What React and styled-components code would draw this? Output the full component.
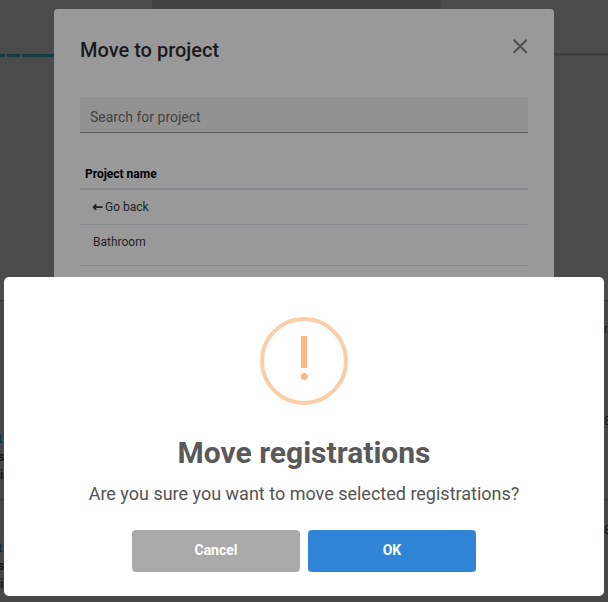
import React, { useState } from "react";
import styled, { createGlobalStyle } from 'styled-components';

const GlobalStyle = createGlobalStyle`
  * {
    box-sizing: border-box;
  }
  body {
    margin: 0;
    font-family: Roboto, "Liberation Sans", sans-serif;
    overflow: hidden;
  }
`;

const Screen = styled.div`
  position: relative;
  height: 602px;
  overflow: hidden;
  background: #4b4b4b;
`;

const TopBar = styled.div`
  height: 54px;
  padding-left: 152px;
`;

const TopTab = styled.div`
  width: 289px;
  height: 40px;
  background: #434343;
`;

const Divider = styled.div`
  display: flex;
  height: 3px;
  gap: 2px;
  margin-bottom: 243px;
`;

const Segment = styled.div`
  width: ${props => props.width}px;
  background: #183b42;
`;

const Shade = styled.div`
  flex: 1;
  margin-top: -1px;
  height: 3px;
  background: linear-gradient(#434343, #3d3d3d, #454545);
`;

const Card = styled.div`
  display: flex;
  justify-content: space-between;
  height: ${props => props.height}px;
  padding-top: ${props => props.top}px;
  background: #474747;
  border-top: 1px solid ${props => props.faint ? '#434343' : '#393939'};
`;

const Labels = styled.div`
  width: 6px;
  font-size: 12px;
  font-weight: 700;
  line-height: 18px;
`;

const Label = styled.div`
  margin-left: ${props => props.shift}px;
  white-space: nowrap;
  color: ${props => props.link ? '#102b38' : '#171717'};
`;

const Amount = styled.div`
  width: 4px;
  font-size: 12px;
  line-height: 18px;
  margin-top: ${props => props.top}px;
  color: ${props => props.link ? '#10202e' : '#171717'};
`;

const Dialog = styled.section`
  position: absolute;
  top: 9px;
  left: 54px;
  width: 500px;
  height: 400px;
  padding: 26px;
  background: #999;
  border-radius: 4px;
`;

const DialogHeader = styled.header`
  display: flex;
  justify-content: space-between;
  height: 62px;
`;

const DialogTitle = styled.h2`
  margin: 0;
  font-size: 20px;
  font-weight: 500;
  line-height: 30px;
  color: #191a1c;
`;

const CloseButton = styled.button`
  all: unset;
  width: 16px;
  height: 16px;
  margin: 3px 0 0;
  svg {
    display: block;
  }
`;

const SearchInput = styled.input`
  display: block;
  width: 100%;
  height: 36px;
  padding: 5px 10px 0;
  border: 0;
  border-bottom: 1px solid #5a5a5a;
  border-radius: 0;
  outline: none;
  background: #929292;
  font-family: inherit;
  font-size: 14px;
  color: #222;
  &::placeholder {
    color: #424242;
    opacity: 1;
  }
`;

const List = styled.div`
  margin-top: 26px;
  font-size: 12px;
  color: #212427;
`;

const ListHeader = styled.div`
  height: 31px;
  padding-left: 5px;
  border-bottom: 2px solid #85898c;
  font-weight: 700;
  line-height: 30px;
  color: #000;
`;

const ListRow = styled.div`
  display: flex;
  align-items: center;
  gap: 2px;
  height: ${props => props.height}px;
  padding: 0 0 ${props => props.bottom}px ${props => props.indent}px;
  border-bottom: 1px solid #85898c;
`;

const Alert = styled.section`
  position: absolute;
  top: 277px;
  left: 4px;
  width: 600px;
  height: 319px;
  padding-top: 40px;
  display: flex;
  flex-direction: column;
  align-items: center;
  background: #fff;
  border-radius: 5px;
`;

const AlertTitle = styled.h1`
  margin: 30px 0 0;
  font-size: 30px;
  font-weight: 700;
  line-height: 36px;
  color: #595959;
`;

const AlertText = styled.p`
  margin: 9px 0 0;
  font-size: 18px;
  line-height: 27px;
  color: #545454;
`;

const Actions = styled.div`
  display: flex;
  gap: 8px;
  margin-top: 23px;
`;

const Button = styled.button`
  width: 168px;
  height: 42px;
  padding: 0 0 2px;
  border: 0;
  border-radius: 4px;
  background: ${props => props.primary ? '#3085d6' : '#aaa'};
  font-family: inherit;
  font-size: 14px;
  font-weight: 700;
  color: #fff;
`;

const PageCard = ({ height, top, faint }) => (
  <Card height={height} top={top} faint={faint}>
    <Labels>
      <Label link shift={-2}>t</Label>
      <Label shift={-2}>ss</Label>
      <Label shift={0}>is</Label>
    </Labels>
    <Amount top={-18}>8</Amount>
  </Card>
);

export default function App() {
  const [search, setSearch] = useState('');

  return (
    <>
      <GlobalStyle />
      <Screen>
        <TopBar><TopTab /></TopBar>
        <Divider>
          <Segment width={5} />
          <Segment width={13} />
          <Segment width={40} />
          <Shade />
        </Divider>
        <Card height={97} top={19}>
          <Labels />
          <Amount link top={0}>n</Amount>
        </Card>
        <PageCard height={102} top={32} faint />
        <PageCard height={103} top={39} />

        <Dialog>
          <DialogHeader>
            <DialogTitle>Move to project</DialogTitle>
            <CloseButton aria-label="Close">
              <svg width="16" height="16" viewBox="0 0 16 16" stroke="#4f4f4f" strokeWidth="2">
                <path d="M1.7 1.7 14.7 14.7M14.7 1.7 1.7 14.7" />
              </svg>
            </CloseButton>
          </DialogHeader>
          <SearchInput placeholder="Search for project" value={search} onChange={e => setSearch(e.target.value)} />
          <List>
            <ListHeader>Project name</ListHeader>
            <ListRow height={35} indent={12} bottom={0}>
              <svg width="11" height="10" viewBox="0 0 11 10" fill="none" stroke="#1c1e20" strokeWidth="1.7">
                <path d="M4.3 2.4 1.6 5.2 4.3 8M1.6 5.2H10.6" />
              </svg>
              Go back
            </ListRow>
            <ListRow height={41} indent={13} bottom={6}>Bathroom</ListRow>
          </List>
        </Dialog>

        <Alert>
          <svg width="88" height="88" viewBox="0 0 88 88">
            <circle cx="44" cy="44" r="42" fill="none" stroke="#facea8" strokeWidth="4" />
            <path d="M41 19h6v32h-6z" fill="#f8bb86" />
            <circle cx="44.3" cy="59.5" r="3.6" fill="#f8bb86" />
          </svg>
          <AlertTitle>Move registrations</AlertTitle>
          <AlertText>Are you sure you want to move selected registrations?</AlertText>
          <Actions>
            <Button>Cancel</Button>
            <Button primary>OK</Button>
          </Actions>
        </Alert>
      </Screen>
    </>
  );
}
